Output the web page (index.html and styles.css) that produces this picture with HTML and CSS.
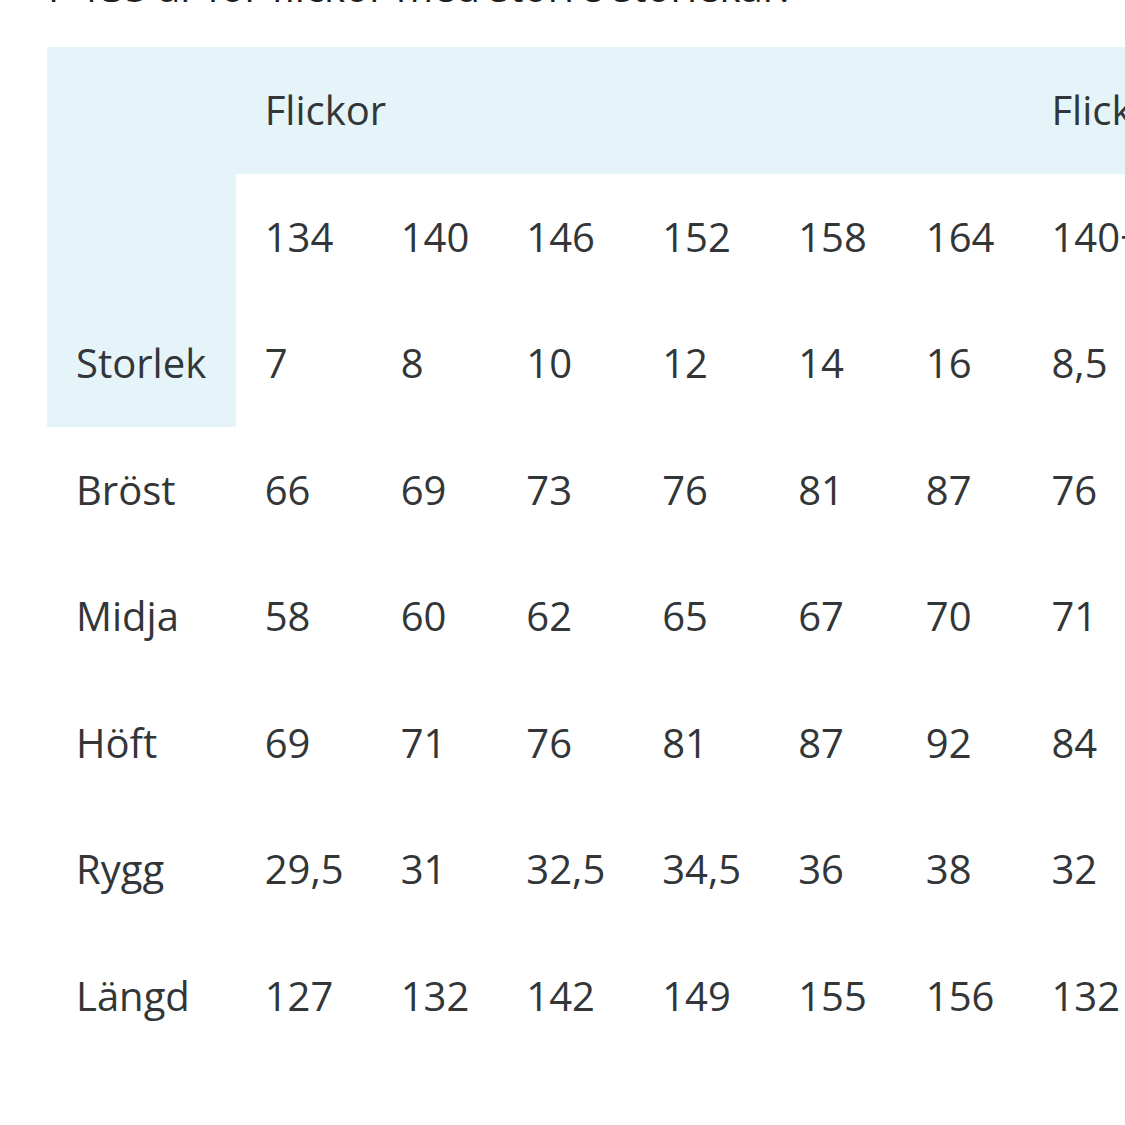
FILE: index.html
```html
<!DOCTYPE html>
<html lang="sv">
<head>
<meta charset="utf-8">
<title>Storlekstabell</title>
<link rel="stylesheet" href="styles.css">
</head>
<body>
<div class="page">
  <p class="intro">F 135 är för flickor med större storlekar.</p>
  <table class="size-table">
    <thead>
      <tr>
        <th class="corner" rowspan="3">Storlek</th>
        <th class="group" colspan="6">Flickor</th>
        <th class="group" colspan="3">Flickor plus</th>
      </tr>
      <tr>
        <td>134</td><td>140</td><td>146</td><td>152</td><td class="wide">158</td><td>164</td><td>140+</td><td>146+</td><td>152+</td>
      </tr>
      <tr>
        <td>7</td><td>8</td><td>10</td><td>12</td><td class="wide">14</td><td>16</td><td>8,5</td><td>10,5</td><td>12,5</td>
      </tr>
    </thead>
    <tbody>
      <tr><th class="label">Bröst</th><td>66</td><td>69</td><td>73</td><td>76</td><td class="wide">81</td><td>87</td><td>76</td><td>80</td><td>84</td></tr>
      <tr><th class="label">Midja</th><td>58</td><td>60</td><td>62</td><td>65</td><td class="wide">67</td><td>70</td><td>71</td><td>73</td><td>76</td></tr>
      <tr><th class="label">Höft</th><td>69</td><td>71</td><td>76</td><td>81</td><td class="wide">87</td><td>92</td><td>84</td><td>88</td><td>92</td></tr>
      <tr><th class="label">Rygg</th><td>29,5</td><td>31</td><td>32,5</td><td>34,5</td><td class="wide">36</td><td>38</td><td>32</td><td>33,5</td><td>35</td></tr>
      <tr><th class="label">Längd</th><td>127</td><td>132</td><td>142</td><td>149</td><td class="wide">155</td><td>156</td><td>132</td><td>140</td><td>147</td></tr>
    </tbody>
  </table>
</div>
</body>
</html>
```

FILE: styles.css
```css
html, body {
  margin: 0;
  padding: 0;
  background: #ffffff;
  overflow: hidden;
}

.page {
  width: 1125px;
  height: 1125px;
  overflow: hidden;
  padding-left: 47px;
  box-sizing: border-box;
  font-family: "Open Sans", "Noto Sans", sans-serif;
  color: #333638;
}

.intro {
  margin: -33.5px 0 0 1px;
  font-size: 40px;
  line-height: 40px;
  height: 40px;
  color: #1e1e1e;
  white-space: nowrap;
}

.size-table {
  margin-top: 40.5px;
  border-collapse: collapse;
  border-spacing: 0;
  width: max-content;
  font-size: 40px;
  line-height: 64.5px;
}

.size-table th,
.size-table td {
  padding: 31px 28.5px;
  text-align: left;
  vertical-align: middle;
  font-weight: 400;
  white-space: nowrap;
}

.size-table .wide {
  padding-right: 30.5px;
}

.size-table .corner,
.size-table .label {
  padding-left: 29px;
  padding-right: 30px;
}

.size-table .corner {
  background: #e4f4f9;
  vertical-align: bottom;
}

.size-table .group {
  background: #e4f4f9;
}
```
